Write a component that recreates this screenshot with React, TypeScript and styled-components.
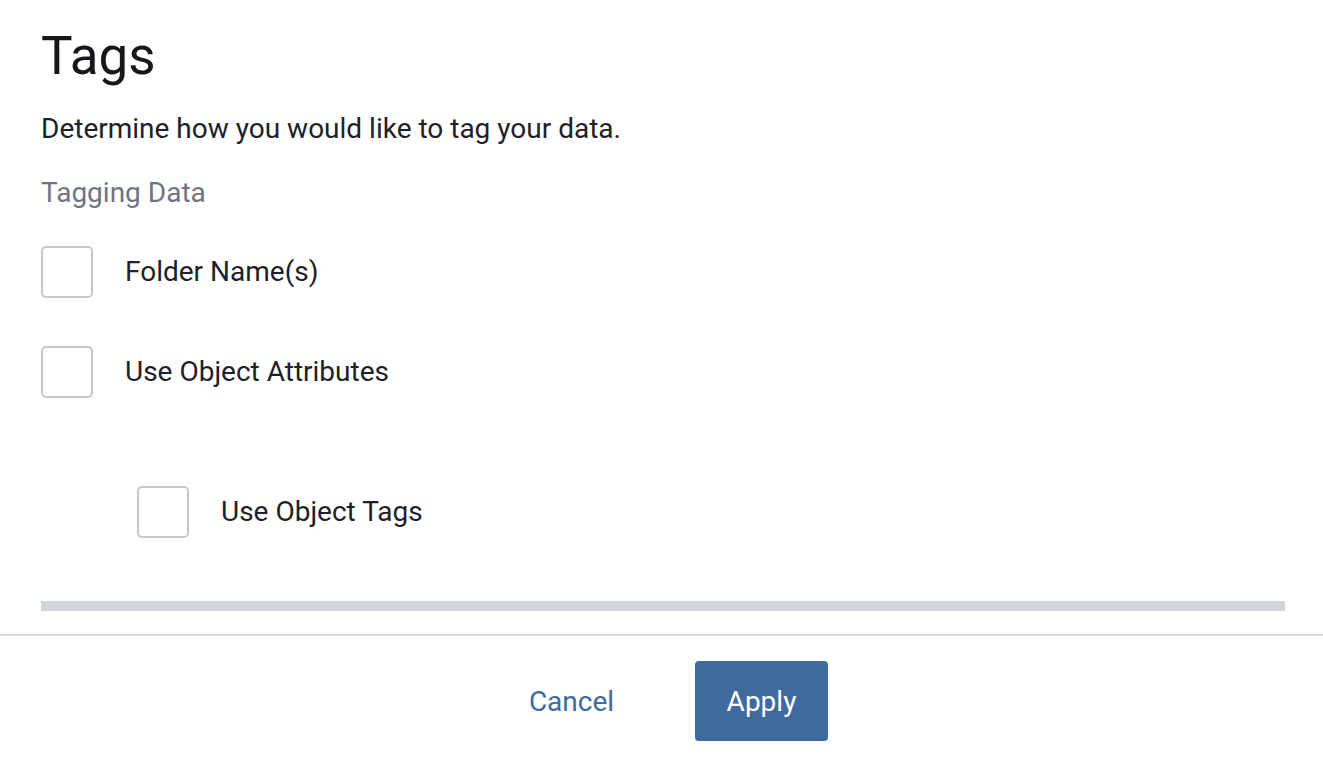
import * as React from 'react';
import styled, { createGlobalStyle } from 'styled-components';

const GlobalStyle = createGlobalStyle`
  html, body {
    margin: 0;
    padding: 0;
    background: #ffffff;
  }
  body {
    font-family: Roboto, "Liberation Sans", sans-serif;
    color: #1e2127;
  }
`;

const Modal = styled.div`
  width: 1323px;
  height: 763px;
  display: flex;
  flex-direction: column;
  overflow: hidden;
`;

const Body = styled.div`
  padding: 0 38px 0 41px;
  display: flex;
  flex-direction: column;
`;

const Title = styled.h1`
  margin: 26px 0 0;
  font-size: 53px;
  line-height: 60px;
  font-weight: 400;
  color: #16181c;
`;

const Description = styled.p`
  margin: 27px 0 0;
  font-size: 28px;
  line-height: 32px;
  color: #1e2127;
`;

const SectionLabel = styled.div`
  margin-top: 32px;
  font-size: 28px;
  line-height: 32px;
  color: #6f7484;
`;

const Options = styled.div`
  margin-top: 37px;
  display: flex;
  flex-direction: column;
  gap: 48px;
`;

const CheckRow = styled.label<{ $indent?: boolean }>`
  display: flex;
  align-items: center;
  gap: 32px;
  margin-left: ${(p) => (p.$indent ? '96px' : '0')};
  margin-top: ${(p) => (p.$indent ? '40px' : '0')};
  cursor: pointer;
`;

const Box = styled.span`
  box-sizing: border-box;
  width: 52px;
  height: 52px;
  border: 2px solid #c3c8cd;
  border-radius: 5px;
  background: #fff;
  flex: none;
`;

const CheckText = styled.span`
  font-size: 28px;
  line-height: 32px;
  color: #1e2127;
`;

const Track = styled.div`
  margin-top: 63px;
  height: 10px;
  background: #d2d6da;
`;

const Footer = styled.div`
  margin-top: 23px;
  border-top: 2px solid #d7dadd;
  padding: 25px 0 0 10px;
  display: flex;
  justify-content: center;
  gap: 57px;
`;

const Button = styled.button<{ $primary?: boolean }>`
  box-sizing: border-box;
  width: 133px;
  height: 80px;
  border: none;
  border-radius: 4px;
  font-family: Roboto, "Liberation Sans", sans-serif;
  font-size: 28px;
  background: ${(p) => (p.$primary ? '#3e6aa0' : 'transparent')};
  color: ${(p) => (p.$primary ? '#ffffff' : '#3e6aa0')};
  cursor: pointer;
`;

const options = [
  { label: 'Folder Name(s)' },
  { label: 'Use Object Attributes' },
  { label: 'Use Object Tags', indent: true },
];

export default function App() {
  return (
    <>
      <GlobalStyle />
      <Modal>
        <Body>
          <Title>Tags</Title>
          <Description>Determine how you would like to tag your data.</Description>
          <SectionLabel>Tagging Data</SectionLabel>
          <Options>
            {options.map((o) => (
              <CheckRow key={o.label} $indent={o.indent}>
                <Box />
                <CheckText>{o.label}</CheckText>
              </CheckRow>
            ))}
          </Options>
          <Track />
        </Body>
        <Footer>
          <Button>Cancel</Button>
          <Button $primary>Apply</Button>
        </Footer>
      </Modal>
    </>
  );
}
